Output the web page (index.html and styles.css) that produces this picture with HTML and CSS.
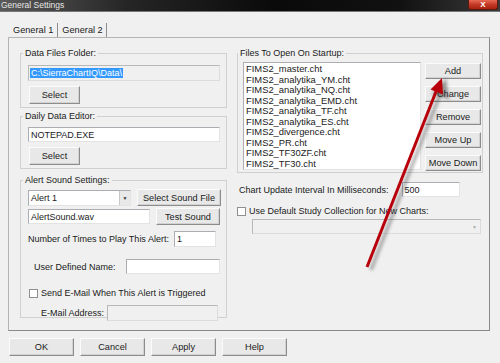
FILE: index.html
```html
<!DOCTYPE html>
<html lang="en">
  <head>
    <meta charset="UTF-8" />
    <title>General Settings</title>
    <link rel="stylesheet" href="styles.css">
  </head>
  <body>
    <div class="window">
      <div class="titlebar">
        <span class="title">General Settings</span>
        <span class="close">X</span>
      </div>
      <div class="tabs">
        <span class="tab active">General 1</span>
        <span class="tab">General 2</span>
      </div>
      <div class="panel">
        <div class="col left">
          <fieldset class="group g-folder">
            <legend>Data Files Folder:</legend>
            <div class="field wide disabled"><span class="sel">C:\SierraChartIQ\Data\</span></div>
            <button class="btn select">Select</button>
          </fieldset>
          <fieldset class="group g-editor">
            <legend>Daily Data Editor:</legend>
            <div class="field wide">NOTEPAD.EXE</div>
            <button class="btn select">Select</button>
          </fieldset>
          <fieldset class="group g-alert">
            <legend>Alert Sound Settings:</legend>
            <div class="row r1">
              <div class="field combo">Alert 1<span class="drop">&#9660;</span></div>
              <button class="btn b-sound">Select Sound File</button>
            </div>
            <div class="row r2">
              <div class="field f-wav">AlertSound.wav</div>
              <button class="btn b-test">Test Sound</button>
            </div>
            <div class="row r3">
              <span class="lbl">Number of Times to Play This Alert:</span>
              <div class="field f-times">1</div>
            </div>
            <div class="row r4">
              <span class="lbl">User Defined Name:</span>
              <div class="field f-name"></div>
            </div>
            <div class="row r5">
              <span class="check"></span>
              <span class="lbl">Send E-Mail When This Alert is Triggered</span>
            </div>
            <div class="row r6">
              <span class="lbl">E-Mail Address:</span>
              <div class="field f-mail disabled"></div>
            </div>
          </fieldset>
        </div>
        <div class="col right">
          <fieldset class="group g-files">
            <legend>Files To Open On Startup:</legend>
            <div class="files">
              <ul class="list">
                <li>FIMS2_master.cht</li>
                <li>FIMS2_analytika_YM.cht</li>
                <li>FIMS2_analytika_NQ.cht</li>
                <li>FIMS2_analytika_EMD.cht</li>
                <li>FIMS2_analytika_TF.cht</li>
                <li>FIMS2_analytika_ES.cht</li>
                <li>FIMS2_divergence.cht</li>
                <li>FIMS2_PR.cht</li>
                <li>FIMS2_TF30ZF.cht</li>
                <li>FIMS2_TF30.cht</li>
              </ul>
              <div class="list-btns">
                <button class="btn">Add</button>
                <button class="btn">Change</button>
                <button class="btn">Remove</button>
                <button class="btn">Move Up</button>
                <button class="btn">Move Down</button>
              </div>
            </div>
          </fieldset>
          <div class="row r-interval">
            <span class="lbl">Chart Update Interval In Milliseconds:</span>
            <div class="field f-interval">500</div>
          </div>
          <div class="row r-study">
            <span class="check"></span>
            <span class="lbl">Use Default Study Collection for New Charts:</span>
          </div>
          <div class="field f-study disabled"><span class="drop">&#9660;</span></div>
        </div>
      </div>
      <div class="footer">
        <button class="btn">OK</button>
        <button class="btn">Cancel</button>
        <button class="btn">Apply</button>
        <button class="btn">Help</button>
      </div>
      <svg class="arrow" width="500" height="363" viewBox="0 0 500 363">
        <g class="shadow">
          <line x1="371" y1="270" x2="441" y2="92" />
          <polygon points="445,82 435,93 447,97" />
        </g>
        <line x1="367" y1="267" x2="437" y2="89" stroke="#b8000b" stroke-width="3" />
        <polygon points="442,78 430.5,89.5 443,94.5" fill="#b8000b" />
      </svg>
    </div>
  </body>
</html>
```

FILE: styles.css
```css
* {
  box-sizing: border-box;
}
body {
  margin: 0;
  background-color: #f0f0f0;
  font-family: "Liberation Sans", Arial, sans-serif;
  font-size: 9px;
  color: #1a1a1a;
}
.window {
  position: relative;
  width: 500px;
  height: 363px;
  overflow: hidden;
}
.titlebar {
  height: 12px;
  display: flex;
  justify-content: space-between;
  background: linear-gradient(to right, #5a5a5a 0%, #262626 25%, #0a0a0a 55%, #111 80%, #3a3a3a 100%);
  border-bottom: 1px solid #777;
}
.title {
  color: #e6e6e6;
  font-size: 8.5px;
  line-height: 10px;
  padding-left: 1px;
}
.close {
  width: 30px;
  height: 10px;
  margin-right: 2px;
  background: linear-gradient(#e86a55, #c23a26 50%, #a8220f);
  border: 1px solid #5a1a10;
  border-top: none;
  border-radius: 0 0 3px 3px;
  color: #fff;
  font-size: 8px;
  font-weight: bold;
  line-height: 9px;
  text-align: center;
}
.tabs {
  height: 25px;
  padding: 11px 0 0 9px;
  display: flex;
}
.tab {
  padding: 2px 3px 0 4px;
  line-height: 11px;
  font-size: 9.2px;
  border-right: 1px solid #8e8e8e;
}
.tab.active {
  padding-right: 4px;
}
.panel {
  margin-left: 8px;
  width: 482px;
  height: 294px;
  border: 1px solid #b4b4b4;
  border-right-color: #8a8a8a;
  border-bottom-color: #8a8a8a;
  padding: 10px 0 0 11px;
  display: flex;
  gap: 10px;
}
.col {
  display: flex;
  flex-direction: column;
}
.left {
  width: 207px;
}
.right {
  width: 246px;
}
.group {
  margin: 0;
  padding: 0 0 0 7px;
  border: 1px solid #d0d0d0;
  min-width: 0;
}
.group legend {
  margin-left: -5px;
  padding: 0 2px;
  line-height: 11px;
}
.field {
  height: 16px;
  background: #fff;
  border: 1px solid #abadb3;
  border-right-color: #e3e3e3;
  border-bottom-color: #e3e3e3;
  padding: 0 2px;
  line-height: 14px;
  white-space: nowrap;
  position: relative;
}
.field.disabled {
  background: #f0f0f0;
  border-color: #b8b8b8 #dcdcdc #dcdcdc #b8b8b8;
}
.wide {
  width: 192px;
}
.sel {
  background: #3399ff;
  color: #fff;
  padding: 0 1px;
  margin-left: -1px;
}
.btn {
  display: block;
  font-family: inherit;
  font-size: 9.2px;
  color: #1a1a1a;
  background: #e8e8e8;
  border: 1px solid;
  border-color: #fbfbfb #8c8c8c #8c8c8c #fbfbfb;
  box-shadow: inset -1px -1px #d2d2d2;
  padding: 0;
  height: 18px;
}
.select {
  width: 51px;
  margin-left: 1px;
}
.g-folder .field {
  margin-top: 6px;
}
.g-folder .btn {
  margin: 5px 0 3px 1px;
}
.g-editor {
  margin-top: 3px;
}
.g-editor .field {
  margin-top: 5px;
  height: 15px;
}
.g-editor .btn {
  margin: 5px 0 3px 1px;
}
.g-alert {
  margin-top: 6px;
  height: 143px;
}
.row {
  display: flex;
  align-items: center;
}
.combo {
  width: 103px;
  height: 16px;
}
.drop {
  position: absolute;
  right: 0;
  top: 0;
  bottom: 0;
  width: 11px;
  background: #e8e8e8;
  border-left: 1px solid #c8c8c8;
  font-size: 5px;
  line-height: 14px;
  text-align: center;
  color: #333;
}
.r1 {
  margin-top: 3px;
}
.b-sound {
  width: 84px;
  height: 17px;
  margin-left: 6px;
}
.r2 {
  margin-top: 2px;
}
.f-wav {
  width: 122px;
  height: 15px;
}
.b-test {
  width: 64px;
  height: 17px;
  margin-left: 6px;
}
.r3 {
  margin-top: 6px;
}
.f-times {
  width: 42px;
  margin-left: 5px;
}
.r4 {
  margin-top: 12px;
  padding-left: 6px;
}
.f-name {
  width: 94px;
  margin-left: 10px;
  height: 15px;
}
.r5 {
  margin-top: 14px;
  padding-left: 1px;
}
.check {
  width: 9px;
  height: 9px;
  background: #fff;
  border: 1px solid #8f8f8f;
  margin-right: 3px;
}
.r6 {
  margin-top: 7px;
  padding-left: 13px;
}
.f-mail {
  width: 111px;
  margin-left: 3px;
}
.g-files {
  padding-left: 5px;
  height: 125px;
}
.files {
  display: flex;
  margin-top: 3px;
}
.list {
  margin: 0;
  padding: 1px 2px;
  list-style: none;
  width: 178px;
  height: 108px;
  background: #fff;
  border: 1px solid #abadb3;
  border-right-color: #e3e3e3;
  border-bottom-color: #e3e3e3;
  font-size: 9.4px;
}
.list li {
  line-height: 10.55px;
}
.list-btns {
  display: flex;
  flex-direction: column;
  gap: 7px;
  margin-left: 4px;
  padding-top: 1px;
}
.list-btns .btn {
  width: 56px;
  height: 16px;
}
.r-interval {
  margin-top: 9px;
  padding-left: 2px;
}
.f-interval {
  width: 58px;
  margin-left: 13px;
  height: 15px;
}
.r-study {
  margin-top: 9px;
  padding-left: 0;
}
.f-study {
  width: 229px;
  margin-left: 15px;
  margin-top: 3px;
  height: 15px;
  background: #f0f0f0;
}
.f-study .drop {
  background: #f0f0f0;
  color: #aaa;
  border-left: none;
}
.footer {
  display: flex;
  gap: 6px;
  padding: 7px 0 0 9px;
}
.footer .btn {
  width: 65px;
  height: 18px;
}
.arrow {
  position: absolute;
  left: 0;
  top: 0;
  pointer-events: none;
}
.shadow {
  stroke: rgba(60, 60, 60, 0.35);
  stroke-width: 4;
  fill: rgba(60, 60, 60, 0.35);
  filter: blur(1.5px);
}
```
